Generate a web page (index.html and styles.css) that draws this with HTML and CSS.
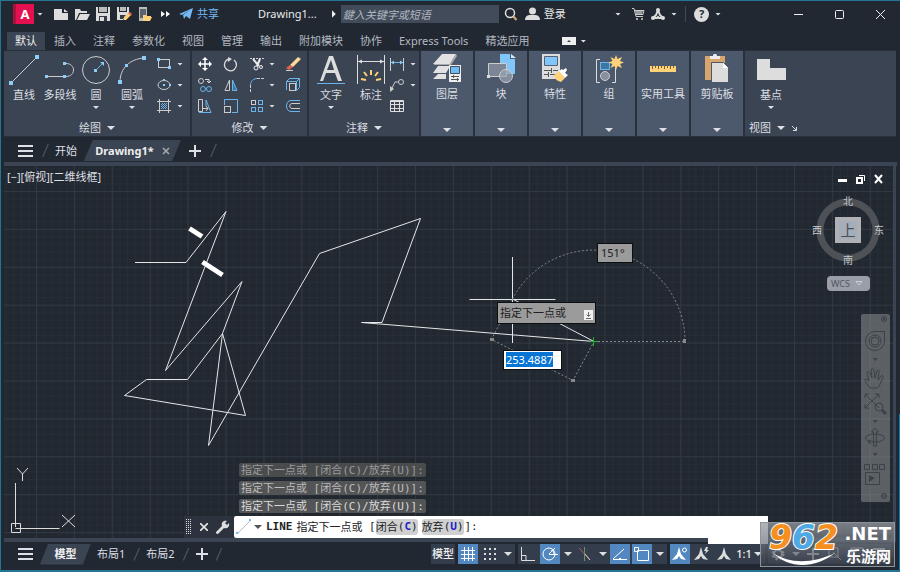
FILE: index.html
```html
<!DOCTYPE html>
<html lang="zh-CN">
<head>
<meta charset="utf-8">
<title>Drawing1</title>
<link rel="stylesheet" href="styles.css">
</head>
<body>
<div class="app">
  <header class="titlebar">
    <button class="logo" aria-label="应用程序菜单"><span>A</span></button>
    <i class="caret"></i>
    <div class="quick">
      <button aria-label="新建"><svg width="15" height="14" viewBox="0 0 15 14"><path fill="#ddd" d="M0 2h8v4h6v7H0zM10 2l4 3h-4z"/></svg></button>
      <button aria-label="打开"><svg width="15" height="14" viewBox="0 0 15 14"><path fill="#ddd" d="M0 2h5l1 2h6v2H4L1 13H0zM5 7h10l-3 6H2z"/></svg></button>
      <button aria-label="保存"><svg width="15" height="14" viewBox="0 0 15 14"><path fill="#ddd" d="M0 0h2v6h10V0h2v14H0z"/><path fill="#bbb" d="M3 0h8v5H3z"/><path fill="#333b47" d="M3 9h8v5H3z"/><path fill="#ddd" d="M4 10h4v4H4z"/></svg></button>
      <button aria-label="另存为"><svg width="15" height="14" viewBox="0 0 15 14"><path fill="#ddd" d="M0 0h2v5h8V0h2v6L6 13H0z"/><path fill="#bbb" d="M3 0h6v4H3z"/><path fill="#333b47" d="M3 8h6l-3 4H3z"/><path fill="#ffd27a" d="M7 10l5-4 2 2-5 5H7z"/><path fill="#e0654f" d="M11 6l2-1 2 2-1 2z"/></svg></button>
      <button aria-label="从移动设备打开"><svg width="15" height="14" viewBox="0 0 15 14"><path fill="#bbb" d="M1 0h8v14H1z"/><path fill="#5b6370" d="M2 2h6v9H2z"/><path fill="#ffd27a" d="M5 8h3l1 1h4v1h1l-2 4H5z"/></svg></button>
      <button aria-label="更多"><svg width="15" height="14" viewBox="0 0 15 14"><path fill="#fff" d="M2 4l4 3-4 3zM7 4l4 3-4 3z"/></svg></button>
    </div>
    <a class="share" href="#"><svg width="14" height="14" viewBox="0 0 14 14"><path fill="#74b9f3" d="M0 7l14-6-3 11-4-3-2 3-1-4 7-5-8 5z"/></svg>共享</a>
    <span class="doc">Drawing1...</span>
    <i class="play"></i>
    <input class="search" type="search" aria-label="搜索" placeholder="鍵入关键字或短语">
    <button class="find" aria-label="查找"><svg width="14" height="14" viewBox="0 0 14 14"><circle cx="6" cy="6" r="4.500" fill="none" stroke="#ddd" stroke-width="1.500"/><path stroke="#d8a878" stroke-width="2" d="M9.500 9.500l3 3.500"/></svg></button>
    <button class="login"><svg width="15" height="14" viewBox="0 0 15 14"><circle cx="7.500" cy="4" r="3.500" fill="#ddd"/><path fill="#ddd" d="M0 13c0-4 3-5 5-5h5c2 0 5 1 5 5z"/></svg>登录</button>
    <div class="services">
      <i class="caret"></i>
      <button aria-label="商店"><svg width="13" height="14" viewBox="0 0 13 14"><path fill="#999" d="M3 3h8l-1 5H4z"/><path fill="none" stroke="#ccc" d="M0 1.500h2l2 8h7M3 3.500h9l-1 4H4"/><circle cx="5" cy="12" r="1" fill="#ccc"/><circle cx="10" cy="12" r="1" fill="#ccc"/></svg></button>
      <button aria-label="应用"><svg width="14" height="14" viewBox="0 0 14 14"><path fill="none" stroke="#ddd" stroke-width="2" d="M7 3l-2 5-3 3M7 3l2 5 3 3M2 11h4l1-1 1 1h4"/><circle cx="7" cy="3" r="2" fill="#ddd"/><circle cx="2" cy="11" r="2" fill="#ddd"/><circle cx="12" cy="11" r="2" fill="#ddd"/></svg></button>
      <i class="caret"></i>
      <i class="rule"></i>
      <button class="help" aria-label="帮助">?</button>
      <i class="caret"></i>
    </div>
    <div class="window">
      <button aria-label="最小化"><svg width="11" height="11" viewBox="0 0 11 11"><path stroke="#eee" d="M1 5.500h9"/></svg></button>
      <button aria-label="最大化"><svg width="11" height="11" viewBox="0 0 11 11"><rect x="1.500" y="1.500" width="8" height="8" rx="1" fill="none" stroke="#eee"/></svg></button>
      <button aria-label="关闭"><svg width="11" height="11" viewBox="0 0 11 11"><path stroke="#eee" d="M1 1l9 9M10 1l-9 9"/></svg></button>
    </div>
  </header>

  <nav class="tabs">
    <a class="on" href="#">默认</a><a href="#">插入</a><a href="#">注释</a><a href="#">参数化</a><a href="#">视图</a><a href="#">管理</a><a href="#">输出</a><a href="#">附加模块</a><a href="#">协作</a><a href="#">Express Tools</a><a href="#">精选应用</a>
    <button class="collapse" aria-label="收起"><svg width="14" height="8" viewBox="0 0 14 8"><path fill="#eee" d="M0 0h14v8H0z"/><path fill="#39424f" d="M5 5h4L7 3z"/></svg><i class="caret"></i></button>
  </nav>

  <section class="ribbon">
    <div class="panel draw">
      <div class="tools">
        <button class="big"><svg width="30" height="30" viewBox="0 0 30 30"><path stroke="#ccc" d="M2 28L28 2"/><path fill="#8ecdf8" d="M0 26h4v4H0zM26 0h4v4h-4z"/></svg>直线</button>
        <button class="big"><svg width="30" height="30" viewBox="0 0 30 30"><path fill="none" stroke="#ccc" d="M2 21.500h19c10 0 10-13 0-13h-2"/><path fill="#8ecdf8" d="M0 20h3v3H0zM18 20h3v3h-3zM18 7h3v3h-3z"/></svg>多段线</button>
        <button class="big"><svg width="30" height="30" viewBox="0 0 30 30"><circle cx="15" cy="15" r="13.500" fill="none" stroke="#ccc"/><path stroke="#69b5ec" d="M15 15l6-6"/><path fill="#8ecdf8" d="M13 14h3v3h-3zM19 7h4v4z"/></svg>圆<i class="caret"></i></button>
        <button class="big"><svg width="30" height="30" viewBox="0 0 30 30"><path fill="none" stroke="#ccc" d="M3 27C3 13 13 4 27 3"/><path fill="#8ecdf8" d="M1 25h4v4H1zM8 9h3v3H8zM25 1h4v4h-4z"/></svg>圆弧<i class="caret"></i></button>
        <div class="mini">
          <button aria-label="矩形"><svg width="16" height="16" viewBox="0 0 16 16"><rect x="2.500" y="3.500" width="11" height="8" fill="none" stroke="#ccc"/><path fill="#8ecdf8" d="M1 2h3v3H1zM12 10h3v3h-3z"/></svg><i class="caret"></i></button>
          <button aria-label="椭圆"><svg width="16" height="16" viewBox="0 0 16 16"><ellipse cx="8" cy="8" rx="6" ry="4.500" fill="none" stroke="#ccc"/><path fill="#8ecdf8" d="M7 7h2v2H7zM7 2h2v2H7zM13 7h2v2h-2z"/></svg><i class="caret"></i></button>
          <button aria-label="图案填充"><svg width="16" height="16" viewBox="0 0 16 16"><path fill="none" stroke="#ccc" d="M3.500 1v14M12.500 1v14M1 3.500h14M1 12.500h14"/><path stroke="#69b5ec" d="M5 7l2-2M5 9l4-4M5 11l6-6M7 11l4-4M9 11l2-2"/></svg><i class="caret"></i></button>
        </div>
      </div>
      <button class="name">绘图<i class="caret wide"></i></button>
    </div>

    <div class="panel modify">
      <div class="tools">
        <div class="grid">
          <button aria-label="移动"><svg width="16" height="16" viewBox="0 0 16 16"><path stroke="#fff" stroke-width="1.500" d="M8 2v12M2 8h12"/><path fill="#fff" d="M8 1l3 3H5zM8 15l3-3H5zM1 8l3-3v6zM15 8l-3-3v6z"/></svg></button>
          <button aria-label="旋转"><svg width="16" height="16" viewBox="0 0 16 16"><path fill="none" stroke="#ddd" stroke-width="1.300" d="M6 3a6 6 0 1 0 5 1"/><path fill="#ddd" d="M5 1l4 2-4 3z"/></svg></button>
          <button aria-label="修剪"><svg width="16" height="16" viewBox="0 0 16 16"><path stroke="#ccc" stroke-dasharray="2 1" d="M1 2.500h14"/><path fill="none" stroke="#eee" stroke-width="2" d="M4 3l6 7M11 3L8 10"/><circle cx="7" cy="12" r="2" fill="none" stroke="#eee"/><circle cx="12" cy="11" r="1.500" fill="none" stroke="#eee"/></svg><i class="caret"></i></button>
          <button aria-label="删除"><svg width="16" height="16" viewBox="0 0 16 16"><path fill="#ffd998" d="M5 9l8-8 3 2-8 8z"/><path fill="#e0654f" d="M1 12l4-3 3 2-4 3z"/><path stroke="#ccc" d="M1 14.500h7"/></svg></button>
          <button aria-label="复制"><svg width="16" height="16" viewBox="0 0 16 16"><circle cx="4" cy="4" r="2.500" fill="none" stroke="#ccc"/><circle cx="6" cy="12" r="2.500" fill="none" stroke="#69b5ec"/><circle cx="12" cy="12" r="2.500" fill="none" stroke="#69b5ec"/><path fill="none" stroke="#ddd" d="M8 2.500h4V5M10 4l2 2 2-2"/></svg></button>
          <button aria-label="镜像"><svg width="16" height="16" viewBox="0 0 16 16"><path fill="none" stroke="#ccc" d="M6.500 3v10.500H2z"/><path fill="#3a77a5" stroke="#69b5ec" d="M9.500 3v10.500H14z"/></svg></button>
          <button aria-label="圆角"><svg width="16" height="16" viewBox="0 0 16 16"><path fill="none" stroke="#69b5ec" d="M1.500 8c0-4 3-6.500 7-6.500"/><path stroke="#ccc" stroke-dasharray="3 1" d="M1.500 8v7M8 1.500h7"/></svg><i class="caret"></i></button>
          <button aria-label="分解"><svg width="16" height="16" viewBox="0 0 16 16"><path fill="none" stroke="#69b5ec" d="M1.500 4.500l3-3h10v9l-3 3M11 5l3-3M1.500 4v9M2 4.500h9.500v9"/><rect x="4.500" y="6.500" width="6" height="7" fill="none" stroke="#ccc"/></svg></button>
          <button aria-label="拉伸"><svg width="16" height="16" viewBox="0 0 16 16"><path fill="none" stroke="#ccc" d="M1.500 1.500h4v12h-4zM5 10.500h6M9 8l2 2.500L9 13"/><path fill="none" stroke="#69b5ec" d="M9 2l5 12.500H2M9 2v6"/></svg></button>
          <button aria-label="缩放"><svg width="16" height="16" viewBox="0 0 16 16"><path fill="none" stroke="#69b5ec" d="M1.500 7V1.500h13v13H9"/><rect x="1.500" y="8.500" width="6" height="6" fill="none" stroke="#ccc"/></svg></button>
          <button aria-label="阵列"><svg width="16" height="16" viewBox="0 0 16 16"><g fill="none" stroke="#69b5ec"><rect x="2.500" y="2.500" width="4" height="4" stroke="#ccc"/><rect x="9.500" y="2.500" width="4" height="4"/><rect x="2.500" y="9.500" width="4" height="4"/><rect x="9.500" y="9.500" width="4" height="4"/></g></svg><i class="caret"></i></button>
          <button aria-label="偏移"><svg width="16" height="16" viewBox="0 0 16 16"><path fill="none" stroke="#69b5ec" d="M15 2.500H6c-6 0-6 11 0 11h9"/><path fill="none" stroke="#ccc" d="M15 5.500H7c-3 0-3 5 0 5h8"/></svg></button>
        </div>
      </div>
      <button class="name">修改<i class="caret wide"></i></button>
    </div>

    <div class="panel note">
      <div class="tools">
        <button class="big"><svg width="30" height="30" viewBox="0 0 30 30"><path fill="#ddd" fill-rule="evenodd" d="M13 1h4l9 25h-4l-3-8h-9l-3 8H4zM11 15h7l-3-10z"/><path stroke="#69b5ec" d="M1 28.500h28"/></svg>文字<i class="caret"></i></button>
        <button class="big"><svg width="30" height="30" viewBox="0 0 30 30"><path stroke="#ddd" d="M1.500 0v29M28.500 0v29M2 6.500h26"/><path fill="#ddd" d="M2 6.500l4-2v4zM28 6.500l-4-2v4z"/><path stroke="#ffd27a" stroke-width="2" d="M15 15v5M8 17l3 4M22 17l-3 4M5 24l5 1M25 24l-5 1"/></svg>标注</button>
        <div class="mini">
          <button aria-label="线性"><svg width="16" height="16" viewBox="0 0 16 16"><path stroke="#ccc" d="M1.500 2v13M14.500 2v13"/><path stroke="#69b5ec" d="M2 6.500h12"/><path fill="#8ecdf8" d="M2 6.500l3-2v4zM14 6.500l-3-2v4z"/></svg><i class="caret"></i></button>
          <button aria-label="引线"><svg width="16" height="16" viewBox="0 0 16 16"><circle cx="12" cy="5" r="2.500" fill="none" stroke="#ccc"/><path fill="none" stroke="#ccc" d="M9 5H6l-4 8"/><path fill="#ccc" d="M1 15V9l4 3z"/></svg><i class="caret"></i></button>
          <button aria-label="表格"><svg width="16" height="16" viewBox="0 0 16 16"><path fill="none" stroke="#ddd" d="M1.500 2.500h13v11h-13zM1 6.500h13M1 10.500h13M5.500 4v9M10.500 4v9M1 3.500h14"/></svg></button>
        </div>
      </div>
      <button class="name">注释<i class="caret wide"></i></button>
    </div>

    <button class="fold"><svg width="32" height="32" viewBox="0 0 32 32"><path fill="#e2e2e2" d="M11 0h14l-6 10H2zM7 12h11v2l-3 5H2zM7 20h8v5H2z"/><path fill="#aaa" d="M25 0l1 2-6 9H3v-1h16z"/><path fill="#eee" d="M18 11h12v17H18z"/><path fill="#6dbcf5" stroke="#444e5c" d="M19.500 12.500h9v7h-9z"/><path stroke="#555" d="M20 22.500h8M20 25.500h8M22.500 21v3M26.500 24v3"/></svg>图层<i class="caret wide"></i></button>
    <button class="fold"><svg width="32" height="32" viewBox="0 0 32 32"><path fill="#80c6fa" d="M15 0h10v5h5v15H15z"/><path fill="#d3ebff" d="M26 0l5 4h-5z"/><path fill="#7d8694" stroke="#ccc" d="M3.500 9.500h18v13h-18z"/><circle cx="21" cy="22" r="6.500" fill="#9aa5b5" fill-opacity=".7" stroke="#ccc"/><path fill="#ddd" d="M2 21h3v3H2z"/></svg>块<i class="caret wide"></i></button>
    <button class="fold"><svg width="32" height="32" viewBox="0 0 32 32"><path fill="#ddd" d="M3 0h18v25H3z"/><path fill="#80c6fa" stroke="#56606f" d="M5.500 2.500h13v9h-13z"/><path stroke="#555" d="M5 16.500h7M14 16.500h5M5 20.500h4M11 20.500h7M12.500 14v5M9.500 18v5"/><path fill="#ffd27a" d="M15 21l6-4 5 7-4 4c-4-1-6-3-7-7z"/><path fill="#fff" d="M20 17l3-2 1 1 3-2 1 2-2 3 3 2-3 3z"/></svg>特性<i class="caret wide"></i></button>
    <button class="fold"><svg width="32" height="32" viewBox="0 0 32 32"><path fill="none" stroke="#ddd" d="M7 5.500H3.500v23H7M19 28.500h3.500V13"/><rect x="7.500" y="8.500" width="9" height="7" fill="#3a77a5" stroke="#69b5ec"/><circle cx="12" cy="22" r="4.500" fill="#88909d" stroke="#ccc"/><path fill="#ffd27a" d="M23 1l1.500 4L29 3l-2 4 4 1.500-4 1.500 2 4-4.500-2L23 16l-1.500-4-4 2 2-4-4-1.500 4-1.500-2-4 4 2z"/></svg>组<i class="caret wide"></i></button>
    <button class="fold"><svg width="32" height="32" viewBox="0 0 32 32"><path fill="#ffd27a" d="M3 12h26v6H3z"/><path stroke="#795d32" d="M5.500 12v3M8.500 12v2M11.500 12v3M14.500 12v2M17.500 12v3M20.500 12v2M23.500 12v3M26.500 12v2"/></svg>实用工具<i class="caret wide"></i></button>
    <button class="fold"><svg width="32" height="32" viewBox="0 0 32 32"><path fill="#d6a66e" d="M4 2h20v24H4z"/><path fill="#eee" d="M9 5V2h3c0-3 4-3 4 0h3v3z"/><path fill="#ddd" stroke="#4c586a" d="M10.500 8.500h12l5 5v15h-17z"/><path fill="#fff" d="M22 9v5h5z"/></svg>剪贴板<i class="caret wide"></i></button>

    <div class="panel view">
      <div class="tools">
        <button class="big"><svg width="30" height="30" viewBox="0 0 30 30"><path fill="#ddd" d="M1 4h13v9h16v12H1z"/></svg>基点<i class="caret"></i></button>
      </div>
      <button class="name">视图<i class="caret wide"></i><svg width="6" height="6" viewBox="0 0 6 6"><path fill="none" stroke="#ddd" d="M1 1l4 4M5.500 2v3.500H2"/></svg></button>
    </div>
  </section>

  <nav class="files">
    <button class="menu" aria-label="菜单"></button>
    <i class="slash"></i>
    <a href="#">开始</a>
    <a class="current" href="#">Drawing1*<svg width="8" height="8" viewBox="0 0 8 8"><path stroke="#aaa" stroke-width="1.500" d="M1 1l6 6M7 1L1 7"/></svg></a>
    <button class="plus" aria-label="新图形"></button>
    <i class="slash"></i>
  </nav>

  <main class="canvas">
    <svg class="drawing" width="100%" height="100%">
      <defs>
        <pattern id="minor" width="7.580" height="7.580" patternUnits="userSpaceOnUse" x="36" y="191"><path fill="none" stroke="#262d37" d="M.5 0v8M0 .5h8"/></pattern>
        <pattern id="major" width="37.900" height="37.900" patternUnits="userSpaceOnUse" x="36" y="191"><path fill="none" stroke="#303843" d="M.5 0v38M0 .5h38"/></pattern>
      </defs>
      <g transform="translate(-4 -166)">
        <rect x="4" y="166" width="100%" height="100%" fill="url(#minor)"/>
        <rect x="4" y="166" width="100%" height="100%" fill="url(#major)"/>
        <g fill="none" stroke="#e4e6e8">
          <path d="M135 262.500h51L226 211.500 165.500 370.500 242 281.500 222.500 333.500 187.500 379.500h-41L124.500 395.500 245.500 415.500 222.500 333.500 208.500 445.500 319.500 253.500 420.500 218.500 382 322.500h-20.500L594 341.500 512.500 299"/>
          <path stroke="#fff" stroke-width="5" d="M189.500 228.500l12.500 8M202.500 262l20 13"/>
          <path d="M469.500 299.500h86M512.500 257v86"/>
        </g>
        <g fill="none" stroke="#868b91" stroke-dasharray="2 2">
          <path d="M512.500 299A91.500 91.500 0 0 1 685 341.500M598 341.500h87M512.500 299L491.500 339.500 573 380.500 594 341.500"/>
        </g>
        <path fill="#888" d="M490 338h4v3h-4zM571 379h4v3h-4zM683 339h3v4h-3z"/>
        <path stroke="#20b030" d="M590 341.500h8M593.500 337v9"/>
        <path fill="none" stroke="#ddd" d="M15.500 483v44M15.500 528.500h44M11.500 523.500h9v9h-9zM17 468l5.500 6v7M28 468l-5.500 6M62 515l13 12M75 515l-13 12"/>
      </g>
    </svg>
    <span class="viewlabel">[−][俯视][二维线框]</span>
    <output class="angle">151°</output>
    <div class="prompt">指定下一点或<svg width="9" height="10" viewBox="0 0 9 10"><path fill="#f2f2f2" d="M0 0h9v10H0z"/><path fill="none" stroke="#666" d="M4.500 2v4M2.500 4.500l2 2 2-2M2 8.500h5"/></svg></div>
    <label class="length" aria-label="长度"><output>253.4887</output></label>

    <div class="viewwin">
      <button aria-label="最小化视口"><svg width="10" height="10" viewBox="0 0 10 10"><path fill="#fff" d="M0 5h9v3H0z"/></svg></button>
      <button aria-label="还原视口"><svg width="10" height="10" viewBox="0 0 10 10"><path fill="none" stroke="#fff" d="M3 1.500h5.500V7"/><path fill="none" stroke="#fff" stroke-width="2" d="M1 4h5v5H1z"/></svg></button>
      <button aria-label="关闭视口"><svg width="10" height="10" viewBox="0 0 10 10"><path stroke="#fff" stroke-width="2" d="M1 1l7 8M8 1L1 9"/></svg></button>
    </div>
    <div class="compass">
      <span class="n">北</span><span class="w">西</span><button>上</button><span class="e">东</span><span class="s">南</span>
    </div>
    <button class="wcs">WCS<svg width="8" height="5" viewBox="0 0 8 5"><path fill="none" stroke="#c9ccd2" d="M1 .5h6L4 4z"/></svg></button>
    <svg class="navbar" width="29" height="188" viewBox="0 0 29 188" fill="none" stroke="#3c4148" role="img" aria-label="导航栏">
      <rect width="29" height="188" rx="2" fill="#a2a4a6" fill-opacity=".45" stroke="none"/>
      <circle cx="23" cy="5" r="2.500"/><path d="M21.500 3.500l3 3M24.500 3.500l-3 3"/>
      <path d="M14 17.500h9.500V27a9.500 9.500 0 1 1-9.500-9.500z"/><circle cx="14" cy="27" r="6"/><circle cx="14" cy="27" r="4"/>
      <path d="M9 74c-2-3-5-6-5-8s2-1 4 1l-2-8c0-2 2-2 3 0l2 5-1-8c0-2 2-2 3 0l1 8 2-7c1-2 3-1 2 1l-1 8 3-4c1-1 3 0 2 2l-3 6c-1 3-2 4-4 4z"/>
      <path d="M4 80l14 14M18 80L4 94M4 84v-4h4M14 80h4v4M4 90v4h4"/><circle cx="18" cy="93" r="4"/><path stroke-width="3" d="M21 96l4 4"/>
      <ellipse cx="14" cy="124" rx="9.500" ry="4"/><path d="M12.500 132v-14h-2l3.500-4 3.500 4h-2v14zM10 126l-3 2 3 2"/>
      <path d="M3.500 150.500h5v5h-5zM11.500 150.500h5v5h-5zM18.500 150.500h5v5h-5zM4.500 158.500h14v12h-14z"/>
      <path fill="#3c4148" stroke="none" d="M8 161l6 3-6 4zM12 44h5l-3 3zM12 106h5l-3 3zM12 139h5l-3 3z"/>
      <circle cx="23" cy="182" r="2.500"/><path d="M21 182h4"/>
    </svg>

    <div class="command">
      <div class="history">
        <p class="old">指定下一点或<code> [</code>闭合<code>(C)/</code>放弃<code>(U)]:</code></p>
        <p class="mid">指定下一点或<code> [</code>闭合<code>(C)/</code>放弃<code>(U)]:</code></p>
        <p>指定下一点或<code> [</code>闭合<code>(C)/</code>放弃<code>(U)]:</code></p>
      </div>
      <div class="entry">
        <div class="handle">
          <svg width="6" height="16" viewBox="0 0 6 16"><path stroke="#ddd" stroke-width="1" stroke-dasharray="1 1" d="M.5 0v16M2.500 0v16M4.500 0v16"/></svg>
          <button aria-label="关闭命令行"><svg width="8" height="8" viewBox="0 0 8 8"><path stroke="#e5e5e5" stroke-width="1.600" d="M0 0l8 8M8 0L0 8"/></svg></button>
          <button aria-label="自定义"><svg width="14" height="14" viewBox="0 0 14 14"><path fill="#ddd" d="M0 12l6-6c-1-3 1-6 5-5L9 3l2 2 2-2c1 4-2 6-5 5l-6 6c-2 0-2-1-2-2z"/></svg></button>
        </div>
        <div class="line">
          <svg width="16" height="16" viewBox="0 0 16 16"><path stroke="#b9bcc2" d="M1 15L15 1"/><path fill="#6dbcf5" d="M0 13h2v2H0zM13 0h2v2h-2z"/></svg>
          <i class="caret wide"></i>
          <code class="cmd">LINE</code>指定下一点或<code> [</code><button>闭合<code>(<b>C</b>)</code></button><button>放弃<code>(<b>U</b>)</code></button><code>]:</code>
          <svg class="up" width="6" height="4" viewBox="0 0 6 4"><path fill="#444" d="M0 4l3-3 3 3z"/></svg>
        </div>
      </div>
    </div>
  </main>

  <footer class="status">
    <button class="menu" aria-label="菜单"></button>
    <a class="current" href="#">模型</a>
    <a href="#">布局1</a><i class="slash"></i>
    <a href="#">布局2</a><i class="slash"></i>
    <button class="plus" aria-label="新布局"></button><i class="slash"></i>
    <div class="toggles">
      <div class="group"><button class="word">模型</button></div>
      <div class="group">
        <button class="lit" aria-label="栅格"><svg width="20" height="20" viewBox="0 0 20 20"><path stroke="#fff" d="M6.500 3v14M10.500 3v14M14.500 3v14M3 6.500h14M3 10.500h14M3 14.500h14"/></svg></button>
        <button aria-label="捕捉"><svg width="20" height="20" viewBox="0 0 20 20"><path stroke="#ddd" stroke-width="2" stroke-dasharray="2 3" d="M4 5h12M4 10h12M4 15h12"/></svg></button>
        <i class="caret wide"></i>
      </div>
      <div class="group">
        <button aria-label="正交"><svg width="20" height="20" viewBox="0 0 20 20"><path fill="none" stroke="#ddd" d="M3.500 3v13.500H17M3 11.500h5V16"/></svg></button>
        <button class="lit" aria-label="极轴"><svg width="20" height="20" viewBox="0 0 20 20"><circle cx="9" cy="10" r="6" fill="none" stroke="#fff"/><path fill="none" stroke="#fff" d="M9 10.500h9M9 10l6-6M14 10c0-3-2-4-3-4"/></svg></button>
        <i class="caret wide"></i>
        <button aria-label="等轴测"><svg width="20" height="20" viewBox="0 0 20 20"><path stroke="#c05660" d="M4 4l11 12"/><path stroke="#6b8f68" d="M9.500 3v14"/><path stroke="#ccc" d="M10 10l5 6"/></svg></button>
        <i class="caret wide"></i>
        <button class="lit" aria-label="对象捕捉追踪"><svg width="20" height="20" viewBox="0 0 20 20"><path fill="none" stroke="#fff" d="M3 15.500h14M3 15L14 5"/><path fill="#fff" d="M9 14h2v2H9z"/></svg></button>
        <button class="lit" aria-label="对象捕捉"><svg width="20" height="20" viewBox="0 0 20 20"><path fill="none" stroke="#fff" d="M5.500 6.500h11v10h-11zM2.500 3.500h4v4h-4z"/></svg></button>
        <i class="caret wide"></i>
      </div>
      <div class="group">
        <button class="lit" aria-label="注释可见性"><svg width="20" height="20" viewBox="0 0 20 20"><path fill="#fff" d="M9 3l2 7 5 6-5-1-2-3-2 3-5 1 5-6z"/><circle cx="14.500" cy="6" r="2" fill="none" stroke="#fff"/></svg></button>
        <button aria-label="自动缩放"><svg width="20" height="20" viewBox="0 0 20 20"><path fill="#ddd" d="M9 3l2 7 5 6-5-1-2-3-2 3-5 1 5-6zM14 3l-2 4h2l-1 3 4-4h-2l1-3z"/></svg></button>
        <button aria-label="注释比例"><svg width="20" height="20" viewBox="0 0 20 20"><path fill="#ddd" d="M10 3l2 7 5 6-5-1-2-3-2 3-5 1 5-6z"/></svg></button>
        <button class="word ratio">1:1</button><i class="caret wide"></i>
      </div>
      <div class="group">
        <button aria-label="设置"><svg width="20" height="20" viewBox="0 0 20 20"><circle cx="10" cy="10" r="5" fill="none" stroke="#ddd" stroke-width="3" stroke-dasharray="2 2"/><circle cx="10" cy="10" r="4" fill="none" stroke="#ddd" stroke-width="2"/></svg></button>
        <i class="caret wide"></i>
        <button aria-label="添加"><svg width="20" height="20" viewBox="0 0 20 20"><path stroke="#ddd" stroke-width="2" d="M10 4v12M4 10h12"/></svg></button>
        <button aria-label="隔离"><svg width="20" height="20" viewBox="0 0 20 20"><path fill="none" stroke="#ddd" d="M4 4h9v9H4zM8 8l8 8"/></svg></button>
        <button aria-label="全屏"><svg width="20" height="20" viewBox="0 0 20 20"><path fill="none" stroke="#ddd" d="M4 4h12v12H4z"/></svg></button>
        <button aria-label="更多设置"><svg width="20" height="20" viewBox="0 0 20 20"><path stroke="#ddd" stroke-width="2" d="M4 5h12M4 10h12M4 15h12"/></svg></button>
      </div>
    </div>
  </footer>

  <div class="patch"></div>
  <aside class="mark">
    <div class="digits"><span>9</span><span class="six">6</span><span>2</span></div>
    <svg width="62" height="14" viewBox="0 0 62 14"><path fill="#fff" d="M0 1c17 11 39 11 62 0-20 16-46 16-62 0z"/></svg>
    <div class="site"><b>.NET</b><strong>乐游网</strong></div>
  </aside>
</div>
</body>
</html>
```

FILE: styles.css
```css
* { box-sizing: border-box; margin: 0; }

body {
  font: 11px/16px "Noto Sans", "Noto Sans CJK SC", sans-serif;
  color: #dcdfe3;
  background: #212832;
}

button, input { font: inherit; color: inherit; background: none; border: 0; padding: 0; }
button, a { display: flex; align-items: center; white-space: nowrap; }
a { color: inherit; text-decoration: none; }
svg { display: block; flex: none; }

.app {
  position: relative;
  display: flex;
  flex-direction: column;
  height: 100vh;
  padding: 0 4px 0 3px;
  border: solid #257594;
  border-width: 1px 0 2px 1px;
  background: linear-gradient(#0b7db5, #0b7db5) right bottom / 1px 156px no-repeat #212832;
}

.caret { flex: none; width: 6px; height: 3px; background: #dcdfe3; clip-path: polygon(0 0, 100% 0, 50% 100%); }
.caret.wide { width: 8px; height: 4px; }

/* title bar */
.titlebar { display: flex; align-items: center; height: 26px; padding: 0 10px 0 9px; }
.logo {
  justify-content: center;
  width: 21px;
  height: 20px;
  margin-right: 3px;
  border-left: 3px solid #a8123c;
  background: #e51050;
  color: #fff;
  font-size: 13px;
  font-weight: 700;
}
.quick { display: flex; gap: 6px; margin-left: 11px; }
.share { gap: 4px; margin-left: 5px; color: #74b9f3; }
.doc { margin-left: 39px; color: #e8e8e8; }
.play { width: 4px; height: 8px; margin-left: 15px; background: #eee; clip-path: polygon(0 0, 100% 50%, 0 100%); }
.search { flex: 0 1 158px; height: 18px; margin-left: 5px; padding: 0 2px; background: #414b5a; font-style: italic; }
.search::placeholder { color: #b2b8c0; }
.find { margin-left: 5px; }
.login { gap: 4px; margin-left: 7px; color: #e8e8e8; }
.services { display: flex; align-items: center; gap: 6px; margin-left: auto; }
.services > :nth-child(2) { margin-left: 5px; }
.rule { width: 1px; height: 16px; margin: 0 2px; background: #424a56; }
.help { justify-content: center; width: 15px; height: 15px; border-radius: 8px; background: #ddd; color: #222832; font-weight: 700; }
.window { display: flex; gap: 30px; margin-left: 72px; }

/* ribbon tabs */
.tabs { display: flex; align-items: flex-end; gap: 1px; height: 23px; padding: 0 3px; color: #b4b9c1; }
.tabs a { height: 18px; padding: 0 8px; }
.tabs .on { background: #3b4453; color: #eee; }
.collapse { gap: 4px; height: 18px; margin-left: 24px; }

/* ribbon */
.ribbon { display: flex; gap: 2px; height: 87px; padding: 1px 0; background: #28303b; }
.panel { display: flex; flex-direction: column; justify-content: space-between; background: #3b4453; }
.tools { display: flex; padding-top: 4px; }
.draw { width: 186px; }
.draw .tools { padding-left: 2px; }
.modify { width: 115px; }
.note { width: 110px; }
.view { flex: 1; }
.name { align-self: center; gap: 6px; height: 16px; }
.view .name { align-self: flex-start; margin-left: 4px; }
.big { flex-direction: column; align-items: center; width: 36px; height: 58px; }
.big svg { margin-bottom: 2px; }
.big .caret { margin-top: 3px; }
.note .big:first-child { width: 44px; }
.view .big { width: 52px; }
.mini { display: flex; flex-direction: column; gap: 5px; margin: 1px 0 0 6px; }
.note .mini { margin-left: 0; }
.mini button { gap: 5px; }
.grid { display: grid; grid-template-columns: 26px 26px 36px 26px; gap: 5px 0; margin-top: 1px; }
.grid button { gap: 4px; padding-left: 5px; }
.fold { flex-direction: column; width: 52px; padding: 3px 0 4px; background: #4c586b; }
.fold .caret { margin-top: auto; }

/* drawing tabs and layout tabs */
.files { display: flex; align-items: center; height: 29px; padding: 2px 14px 0; border-bottom: 4px solid #3b4453; margin-right: -1px; }
.menu { flex: none; width: 15px; height: 12px; background: repeating-linear-gradient(#dcdfe3 0 2px, transparent 2px 5px); }
.slash { flex: none; width: 7px; height: 13px; background: #4a525e; clip-path: polygon(80% 0, 100% 0, 20% 100%, 0 100%); }
.files .slash { margin: 0 6px 0 9px; }
.current { justify-content: center; height: 21px; background: #3b4453; color: #eee; font-weight: 700; clip-path: polygon(9% 0, 100% 0, 91% 100%, 0 100%); }
.files .current { gap: 8px; width: 97px; margin-left: 7px; }
.plus { flex: none; width: 12px; height: 12px; background: linear-gradient(#dcdfe3, #dcdfe3) center / 12px 2px no-repeat, linear-gradient(#dcdfe3, #dcdfe3) center / 2px 12px no-repeat; }
.files .plus { margin-left: 8px; }

/* model space */
.canvas { position: relative; flex: 1; min-height: 0; overflow: hidden; border: solid #3b4453; border-width: 0 3px 4px 0; background: #22282f; }
.drawing { position: absolute; inset: 0; }
.viewlabel { position: absolute; left: 3px; top: 3px; }
.angle, .prompt, .length { position: absolute; border: 1px solid #0c0e10; background: #9b9b9b; color: #1d2024; }
.angle { left: 593px; top: 77px; width: 36px; height: 20px; padding: 1px 3px; }
.prompt { left: 493px; top: 136px; display: flex; justify-content: space-between; align-items: center; width: 99px; height: 22px; padding: 0 2px; }
.prompt svg { align-self: flex-end; margin-bottom: 3px; }
.length { left: 499px; top: 184px; width: 59px; height: 20px; padding: 1px 2px; background: #fff; color: #fff; }
.length output { background: #0874d4; }
.viewwin { position: absolute; top: 8px; right: 9px; display: flex; gap: 8px; }
.compass {
  position: absolute;
  top: 28px;
  right: 9px;
  display: grid;
  grid-template: 20px 32px 20px / 18px 36px 18px;
  place-items: center;
  background: radial-gradient(circle, transparent 24px, #4e5256 25px 31px, transparent 32px);
  color: #c4c7cb;
  font-size: 10px;
}
.compass .n, .compass .s { grid-column: 1 / 4; }
.compass .n { align-self: start; line-height: 14px; }
.compass .s { align-self: end; line-height: 12px; }
.compass .w { justify-self: start; }
.compass .e { justify-self: end; }
.compass button { justify-content: center; width: 26px; height: 26px; border: 4px solid #b0b1b5; background: #a5adb8; color: #4a4f58; font-size: 15px; }
.wcs { position: absolute; top: 110px; right: 23px; gap: 5px; width: 43px; height: 15px; padding-left: 4px; border-radius: 4px; background: #9a9ea8; color: #52565e; font-size: 9px; }
.navbar { position: absolute; top: 148px; right: 3px; }

/* command line */
.command { position: absolute; left: 180px; right: 126px; bottom: 0; }
code { font: 11px/16px "DejaVu Sans Mono", monospace; white-space: pre; }
.history { display: flex; flex-direction: column; align-items: flex-start; gap: 4px; margin: 0 0 3px 55px; }
.history p { height: 14px; padding: 0 2px; border-radius: 2px; background: #535456; line-height: 14px; color: #dadada; }
.history code { line-height: 14px; }
.history .mid { color: #bcbcbc; }
.history .old { color: #9b9b9b; background: #494b4d; }
.entry { display: flex; height: 22px; }
.handle { display: flex; align-items: center; gap: 8px; width: 50px; padding-left: 2px; background: #2c333f; }
.line { display: flex; align-items: center; flex: 1; padding: 0 2px; border-radius: 2px; background: #fff; color: #222; }
.line .caret { margin: 0 4px 0 2px; background: #555; }
.cmd { margin-right: 4px; font-weight: 700; }
.line button { height: 16px; margin-right: 4px; border-radius: 3px; background: #d0d0d0; }
.line button + code { margin-left: -3px; }
.line b { color: #2222cc; }
.up { margin-left: auto; }

/* status bar */
.status { display: flex; align-items: center; height: 28px; padding: 0 5px 4px 14px; }
.status > .current { width: 51px; margin: 0 6px 0 7px; clip-path: polygon(16% 0, 100% 0, 84% 100%, 0 100%); }
.status .slash { margin: 0 6px 0 8px; }
.toggles { display: flex; gap: 3px; margin-left: auto; }
.group { display: flex; align-items: center; height: 20px; background: #343d4b; }
.group .caret { margin: 0 3px 0 2px; }
.group button { margin-right: 2px; }
.group .lit { background: #5287bf; }
.group .word { justify-content: center; width: 24px; margin-right: 0; font-weight: 500; color: #eee; }
.group .ratio { width: 16px; }

/* site badge */
.patch { position: absolute; right: 132px; bottom: 26px; width: 60px; height: 28px; background: #fff; }
.mark {
  position: absolute;
  right: 5px;
  bottom: 3px;
  display: grid;
  grid-template-columns: 68px 1fr;
  width: 135px;
  height: 45px;
  padding: 0 3px 0 8px;
  border: 1px solid #8d939b;
  background: linear-gradient(rgba(150, 155, 162, .75), rgba(55, 62, 73, .65));
  color: #fff;
}
.digits { grid-area: 1 / 1; color: #f59020; font: italic 700 33px/30px "DejaVu Sans", sans-serif; -webkit-text-stroke: 2px #fff; paint-order: stroke fill; }
.digits .six { color: #4fa9e4; }
.mark svg { grid-area: 1 / 1; align-self: end; margin: 0 0 1px 4px; }
.site { grid-area: 1 / 2; display: flex; flex-direction: column; align-items: flex-end; }
.site b { font: 700 18px/22px "DejaVu Sans", sans-serif; }
.site strong { font-size: 15px; line-height: 22px; }
```
